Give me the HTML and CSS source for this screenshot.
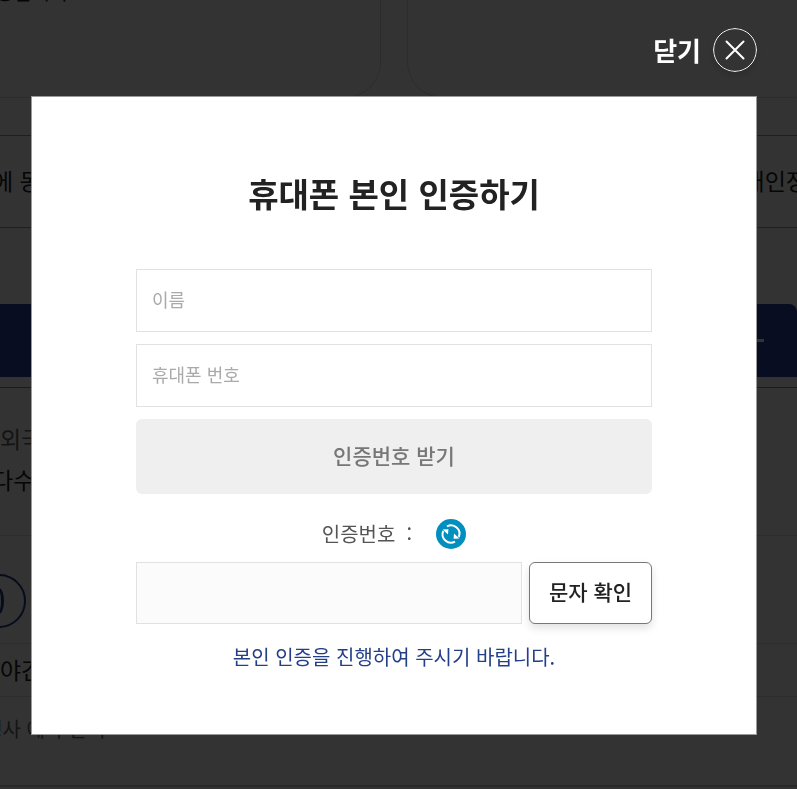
FILE: index.html
```html
<!DOCTYPE html>
<html lang="ko">
<head>
    <meta charset="UTF-8">
    <meta name="viewport" content="width=device-width, initial-scale=1.0">
    <title>휴대폰 본인 인증하기</title>
    <link rel="stylesheet" href="styles.css">
</head>
<body>
    <!-- 본문 -->
    <main class="page" aria-hidden="true">
        <section class="cards">
            <div class="card"><p>성됩니다</p></div>
            <div class="card"></div>
        </section>
        <section class="agree">
            <span>에 동의</span>
            <span>개인정</span>
        </section>
        <div class="bar"><i class="minus"></i></div>
        <section class="notice">
            <p class="gray">외국인</p>
            <p class="cut">다수의</p>
        </section>
        <section class="round"><span class="ring"><i></i></span></section>
        <section class="night">야간</section>
        <section class="event"><p>행사 예약 알기</p></section>
    </main>

    <!-- 본인 인증 레이어 -->
    <div class="layer">
        <div class="popup" role="dialog" aria-labelledby="popup_title">
            <button type="button" class="close">
                <span>닫기</span>
                <svg width="44" height="44" viewBox="0 0 44 44">
                    <circle cx="22" cy="22" r="21.4"/>
                    <path d="M13.5 13.5L30.5 30.5M30.5 13.5L13.5 30.5"/>
                </svg>
            </button>
            <form class="box">
                <h1 id="popup_title">휴대폰 본인 인증하기</h1>
                <input type="text" class="text" placeholder="이름" aria-label="이름">
                <input type="tel" class="text" placeholder="휴대폰 번호" aria-label="휴대폰 번호">
                <button type="button" class="send" disabled>인증번호 받기</button>
                <div class="code">
                    <label for="code">인증번호 &nbsp;:</label>
                    <button type="button" class="refresh" aria-label="새로고침">
                        <svg width="30" height="30" viewBox="0 0 30 30">
                            <circle cx="15" cy="15" r="15"/>
                            <path class="arc" d="M11 7.4A8.4 8.4 0 0 1 22.8 18M19 22.6A8.4 8.4 0 0 1 7.2 12"/>
                            <path class="head" d="M6.6 10.4L12.4 10.2L12 15.6ZM23.4 19.6L17.6 19.8L18 14.4Z"/>
                        </svg>
                    </button>
                </div>
                <div class="confirm">
                    <input type="text" id="code" class="text" readonly>
                    <button type="button" class="check">문자 확인</button>
                </div>
                <p class="msg">본인 인증을 진행하여 주시기 바랍니다.</p>
            </form>
        </div>
    </div>
</body>
</html>
```
FILE: styles.css
```css
*{margin:0;padding:0;box-sizing:border-box;}

body{
    font-family:"Noto Sans CJK KR", "Noto Sans KR", sans-serif;
    color:#222;
    background:#fff;
}
button, input{font-family:inherit;}
button{border:0;background:none;cursor:pointer;}

/* 본문 */
.page{
    height:100vh;
    overflow:hidden;
    font-size:23px;
    line-height:34px;
    white-space:nowrap;
}
.cards{
    display:flex;
    gap:26px;
    height:98px;
    margin:0 -30px 0 -40px;
}
.card{
    flex:1;
    padding:0 26px 26px;
    border:1px solid #ddd;
    border-top:0;
    border-radius:0 0 36px 36px;
}
.card p{
    height:72px;
    margin-top:-16px;
    padding-left:8px;
    line-height:16px;
    font-size:20px;
}
.agree{
    display:flex;
    justify-content:space-between;
    align-items:center;
    height:93px;
    margin:37px -10px 0 -8px;
    padding-bottom:4px;
    border-top:1px solid #999;
    border-bottom:1px solid #999;
}
.bar{
    display:flex;
    justify-content:flex-end;
    align-items:center;
    height:73px;
    margin-top:76px;
    padding-right:33px;
    border-radius:0 8px 0 0;
    background:#2841a8;
}
.minus{width:20px;height:3px;background:#fff;}
.notice{
    height:149px;
    margin-top:10px;
    padding-top:33px;
    border-top:1px solid #888;
    border-bottom:1px solid #ddd;
}
.gray{color:#666;}
.notice p{height:41px;}
.cut{margin-left:-8px;}
.round{
    height:108px;
    padding-top:38px;
    border-bottom:1px solid #ddd;
}
.ring{
    display:flex;
    justify-content:center;
    align-items:center;
    width:54px;
    height:54px;
    margin-left:-28px;
    border:2px solid #1f3c88;
    border-radius:50%;
}
.ring i{
    width:10px;
    height:26px;
    border:3px solid #1f3c88;
    border-radius:50%;
}
.night{
    height:53px;
    line-height:50px;
    border-bottom:1px solid #ddd;
}
.event{
    height:90px;
    padding-top:15px;
    border-bottom:2px solid #ccc;
    color:#666;
    font-size:20px;
}
.event p{margin-left:-16px;}

/* 레이어 팝업 */
.layer{
    position:fixed;
    top:0;
    right:0;
    bottom:0;
    left:0;
    padding:28px 40px 0 31px;
    overflow:auto;
    background:rgba(0,0,0,.8);
}
.close{
    display:flex;
    align-items:center;
    gap:12px;
    margin:0 0 24px auto;
    color:#fff;
    font-size:26px;
    font-weight:700;
    line-height:44px;
}
.close svg{
    fill:none;
    stroke:#fff;
    border-radius:50%;
    box-shadow:0 4px 8px rgba(0,0,0,.15);
}
.close path{stroke-width:2;stroke-linecap:round;}

.box{
    display:flex;
    flex-direction:column;
    gap:12px;
    padding:72px 104px 60px;
    border:1px solid #999;
    background:#fff;
}
.box h1{
    margin-bottom:40px;
    font-size:33px;
    font-weight:700;
    line-height:48px;
    text-align:center;
}
.text{
    width:100%;
    height:63px;
    padding:0 15px 4px;
    border:1px solid #e1e1e1;
    border-radius:0;
    font-size:18px;
    outline:0;
}
.text::placeholder{color:#aaa;}
.send{
    height:75px;
    padding-bottom:4px;
    border-radius:6px;
    background:#efefef;
    color:#777;
    font-size:21px;
    font-weight:500;
}
.code{
    display:flex;
    justify-content:center;
    align-items:center;
    gap:24px;
    margin-top:13px;
    color:#555;
    font-size:20px;
    line-height:30px;
}
.refresh{height:30px;}
.refresh svg{display:block;fill:#008fbe;}
.refresh .arc{fill:none;stroke:#fff;stroke-width:2;}
.refresh .head{fill:#fff;}
.confirm{display:flex;gap:7px;margin-top:1px;}
.confirm .text{
    flex:1;
    min-width:0;
    height:62px;
    background:#fbfbfb;
}
.check{
    width:123px;
    padding-bottom:4px;
    border:1px solid #777;
    border-radius:6px;
    background:#fff;
    box-shadow:0 4px 8px rgba(0,0,0,.12);
    color:#222;
    font-size:21px;
    font-weight:500;
}
.msg{
    margin-top:4px;
    color:#233f87;
    font-size:20px;
    line-height:34px;
    text-align:center;
}
```
